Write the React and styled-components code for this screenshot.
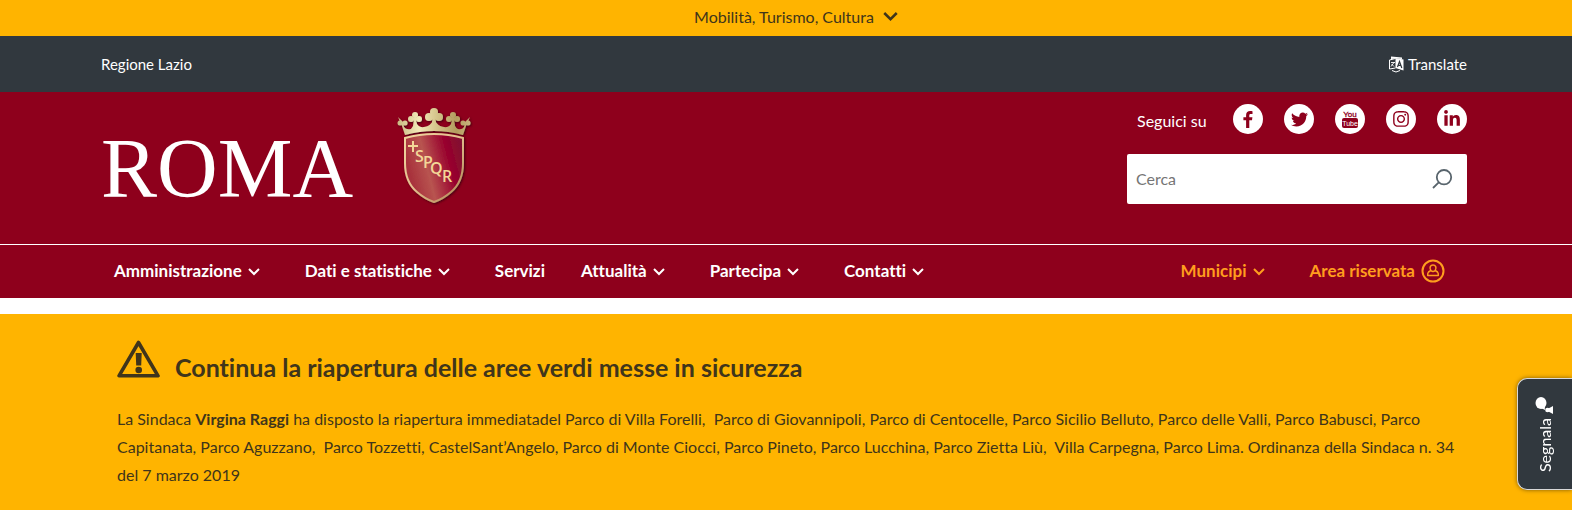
// Dependencies
import React from 'react';
import styled, { createGlobalStyle } from 'styled-components';
import { FaTwitter, FaInstagram, FaLinkedinIn } from 'react-icons/fa';

// Styles
const red = '#8e001c'
const dark = '#31383e'
const yellow = '#ffb400'
const ink = '#40351b'

const GlobalStyle = createGlobalStyle`
  * {
    box-sizing: border-box;
  }

  body {
    margin: 0;
    background: #fff;
    color: ${ink};
    font-family: Lato, 'Liberation Sans', sans-serif;
    font-size: 16px;
    font-variant-ligatures: none;
    line-height: 28px;
  }

  a {
    color: inherit;
    text-decoration: none;
  }

  button, input {
    font: inherit;
    color: inherit;
    border: 0;
    padding: 0;
    background: none;
  }

  svg {
    display: block;
    flex: none;
  }
`

const Container = styled.div`
  display: flex;
  justify-content: space-between;
  padding: 0 105px 0 101px;
`

const TopicsBar = styled.div`
  display: flex;
  justify-content: center;
  height: 36px;
  padding: 0 0 2px 20px;
  background: ${yellow};
`

const TopicsButton = styled.button`
  display: flex;
  align-items: center;
  gap: 9px;

  svg {
    margin-bottom: 4px;
  }
`

const RegionBar = styled(Container)`
  align-items: center;
  height: 56px;
  background: ${dark};
  color: #fff;
  font-size: 15px;
`

const TranslateLink = styled.a`
  display: flex;
  align-items: center;
  gap: 4px;
`

const Header = styled.header`
  background: ${red};
  color: #fff;
`

const Masthead = styled(Container)`
  height: 152px;
  padding-top: 12px;
`

const Brand = styled.a`
  display: flex;
  align-items: flex-start;
  gap: 44px;
`

const Wordmark = styled.span`
  padding-top: 17px;
  font-family: 'Liberation Serif', serif;
  font-size: 84px;
  line-height: 96px;
`

const BrandCrest = styled.span`
  padding-top: 4px;
`

const Tools = styled.div`
  display: flex;
  flex-direction: column;
  gap: 19px;
  width: 340px;
`

const Social = styled.div`
  display: flex;
  gap: 21px;
  padding-left: 10px;
`

const SocialLabel = styled.span`
  margin-right: auto;
  padding-top: 3px;
`

const SocialLink = styled.a`
  display: flex;
  align-items: center;
  justify-content: center;
  width: 30px;
  height: 30px;
  border-radius: 50%;
  background: #fff;
  color: ${red};
`

const SearchForm = styled.form`
  display: flex;
  align-items: center;
  height: 50px;
  padding: 0 14px 0 9px;
  border-radius: 2px;
  background: #fff;
  color: #58646c;
`

const SearchInput = styled.input`
  flex: 1;
  min-width: 0;
  outline: none;

  &::placeholder {
    color: #757575;
    opacity: 1;
  }
`

const Nav = styled.nav`
  border-top: 1px solid #fff;
`

const NavInner = styled(Container)`
  height: 53px;
  padding-left: 114px;
  padding-right: 127px;
`

const NavList = styled.ul`
  display: flex;
  gap: ${props => props.$accent ? '45px' : '36px'};
  margin: 0;
  padding: 0;
  list-style: none;
  font-size: 17px;
  font-weight: bold;
  color: ${props => props.$accent ? '#ff9d1e' : '#fff'};
`

const NavItem = styled.li`
  padding-right: ${props => props.$sub ? '9px' : '0'};
`

const NavLink = styled.a`
  display: flex;
  align-items: center;
  gap: 6px;
  height: 52px;
`

const Alert = styled.section`
  margin-top: 16px;
  padding: 26px 117px 21px;
  background: ${yellow};
`

const AlertHeader = styled.div`
  display: flex;
  gap: 15px;
  margin-bottom: 22px;
`

const AlertTitle = styled.h2`
  margin: 0;
  padding-top: 11px;
  font-size: 25px;
  line-height: 32px;
`

const AlertText = styled.p`
  margin: 0;
`

const ReportButton = styled.button`
  position: fixed;
  right: 0;
  top: 378px;
  display: flex;
  flex-direction: column;
  align-items: center;
  gap: 4px;
  width: 55px;
  height: 112px;
  padding-top: 17px;
  border: 1px solid #d8d8d8;
  border-right: 0;
  border-radius: 10px 0 0 10px;
  background: ${dark};
  color: #fff;
  box-shadow: 0 0 4px rgba(0, 0, 0, 0.5);
`

const ReportLabel = styled.span`
  writing-mode: vertical-rl;
  transform: rotate(180deg);
`

// Icons
const Chevron = ({ width = 12, stroke = 2 }) => (
  <svg width={width} height={width} viewBox="0 0 12 12" fill="none" stroke="currentColor" strokeWidth={stroke}>
    <path d="M1 4 L6 9 L11 4" />
  </svg>
)

const TranslateIcon = () => (
  <svg width="15" height="17" viewBox="0 0 15 17">
    <path d="M6.5 2 L14.5 3.5 V14.5 L6.5 12 Z" fill="#fff" />
    <path d="M6.5 2.5 L0.5 4 V13 L6.5 12 M3 14.5 Q7 17.5 11 14.5" fill="none" stroke="#fff" />
    <path d="M2 0.5 L13 1.5 V3 L7 2.5 L2 3 Z" fill="#fff" />
    <path d="M2 6.5 H6 M5 6.5 L2 10.5 M2.5 8 L5 10.5" fill="none" stroke="#fff" strokeWidth="0.9" />
    <path d="M8.5 11 L10.5 5.5 L12.8 12 M9.3 9.3 H11.8" fill="none" stroke={dark} strokeWidth="1.2" />
  </svg>
)

const FacebookIcon = () => (
  <svg width="10" height="17" viewBox="0 0 10 17" fill="currentColor">
    <path d="M9.5 0.2 V3 H7.8 C6.6 3 6.3 3.6 6.3 4.4 V6.2 H9.4 L9 9.2 H6.3 V17 H3.1 V9.2 H0.4 V6.2 H3.1 V3.9 C3.1 1.3 4.7 0 7.1 0 C8.2 0 9.2 0.1 9.5 0.2 Z" />
  </svg>
)

const YoutubeIcon = () => (
  <svg width="18" height="20" viewBox="0 0 18 20" fontFamily="'Liberation Sans', sans-serif" textAnchor="middle">
    <text x="9" y="8" fontSize="8" fill={red} stroke={red} strokeWidth="0.3">You</text>
    <rect x="1" y="9" width="16" height="10" rx="2" fill={red} />
    <text x="9" y="17" fontSize="7" fill="#fff">Tube</text>
  </svg>
)

const SearchIcon = () => (
  <svg width="21" height="20" viewBox="0 0 21 20" fill="none" stroke="currentColor" strokeWidth="1.8">
    <circle cx="12" cy="8.2" r="7.2" />
    <path d="M7 13.2 L1 19" />
  </svg>
)

const UserIcon = () => (
  <svg width="24" height="24" viewBox="0 0 24 24" fill="none" stroke="currentColor">
    <circle cx="12" cy="12" r="10.5" strokeWidth="2" />
    <path d="M9.8 11.5 C8 8.5 9.5 6 12 6 S16 8.5 14.2 11.5 L16.5 13 Q17.5 14 17.3 16.5 H6.7 Q6.5 14 7.5 13 Z M9.8 11.5 Q12 13.5 14.2 11.5" strokeWidth="1.5" strokeLinejoin="round" />
  </svg>
)

const WarningIcon = () => (
  <svg width="43" height="38" viewBox="0 0 43 38">
    <path d="M21.5 2.5 L41 35.8 H2 Z" fill="none" stroke={ink} strokeWidth="3.6" strokeLinejoin="round" />
    <path d="M18.7 13 H24.7 L24.2 25.5 H19.2 Z" fill={ink} />
    <circle cx="21.7" cy="30" r="3.3" fill={ink} />
  </svg>
)

const ReportIcon = () => (
  <svg width="20" height="18" viewBox="0 0 20 18" fill="currentColor">
    <ellipse cx="6" cy="7" rx="5.5" ry="6" />
    <path d="M6 12 L10 14 L9.5 10 Z" />
    <circle cx="12.5" cy="14" r="2.3" />
    <path d="M12.5 13 L18 10 V18 L12.5 15 Z" />
  </svg>
)

const Trefoil = ({ x, y, r = 3 }) => (
  <g>
    <circle cx={x} cy={y} r={r} />
    <circle cx={x - r - 1} cy={y + r + 1} r={r} />
    <circle cx={x + r + 1} cy={y + r + 1} r={r} />
    <circle cx={x} cy={y + r + 1} r={r - 1} />
    <path d={`M${x - 1} ${y + 4} h2 l1 7 l4 6 h-12 l4 -6 Z`} />
  </g>
)

const Crest = () => (
  <svg width="76" height="100" viewBox="0 0 76 100" role="img" aria-label="SPQR">
    <defs>
      <linearGradient id="gold" gradientUnits="userSpaceOnUse" x1="0" y1="0" x2="74" y2="0">
        <stop offset="0" stopColor="#c8b982" />
        <stop offset="0.3" stopColor="#f3e9b9" />
        <stop offset="0.5" stopColor="#d9ca91" />
        <stop offset="0.8" stopColor="#b39c5e" />
        <stop offset="1" stopColor="#c9b67f" />
      </linearGradient>
      <linearGradient id="field" x1="0" x2="1" y1="0.3" y2="0">
        <stop offset="0" stopColor="#a8323c" />
        <stop offset="0.3" stopColor="#b85450" />
        <stop offset="0.68" stopColor="#98002d" />
        <stop offset="1" stopColor="#7c1631" />
      </linearGradient>
      <linearGradient id="rim" x1="0" x2="1" y1="0" y2="1">
        <stop offset="0" stopColor="#f0d49e" />
        <stop offset="0.5" stopColor="#e3be8d" />
        <stop offset="1" stopColor="#ad8251" />
      </linearGradient>
      <filter id="shade" x="-20%" y="-20%" width="140%" height="140%">
        <feDropShadow dx="1" dy="1" stdDeviation="1" floodColor="#30000a" floodOpacity="0.8" />
      </filter>
    </defs>
    <g fill="url(#gold)" filter="url(#shade)">
      <path d="M1 9 L6 14 L7 19 Q9 22 14 21 Q18 20 17 14 H19 Q21 20 27 19 Q34 18 36 12 H38 Q40 18 47 19 Q53 20 55 14 H57 Q57 20 61 21 Q65 22 67 19 L68 14 L73 9 L69 18 L66 27 Q37 19 8 27 L5 18 Z" />
      <circle cx="3" cy="15" r="2.5" />
      <circle cx="8" cy="15" r="2.5" />
      <circle cx="66" cy="15" r="2.5" />
      <circle cx="71" cy="15" r="2.5" />
      <Trefoil x={18} y={7} />
      <Trefoil x={37} y={4} r={4} />
      <Trefoil x={56} y={7} />
    </g>
    <path d="M8 30 Q37 22 66 30 V55 Q66 74 54 84 Q46 91 37 94 Q28 91 20 84 Q8 74 8 55 Z" fill="url(#field)" stroke="url(#rim)" strokeWidth="2" filter="url(#shade)" />
    <g fill="#f3d697" fontFamily="'Open Sans', sans-serif" fontSize="16" fontWeight="600">
      <path d="M16 33 V44 M11 38 H21" stroke="#f3d697" strokeWidth="2" />
      <text x="18" y="54">S</text>
      <text x="26" y="60">P</text>
      <text x="33" y="66">Q</text>
      <text x="45" y="74">R</text>
    </g>
  </svg>
)

// Data
const mainMenu = [
  { label: 'Amministrazione', sub: true },
  { label: 'Dati e statistiche', sub: true },
  { label: 'Servizi', sub: false },
  { label: 'Attualità', sub: true },
  { label: 'Partecipa', sub: true },
  { label: 'Contatti', sub: true },
]

const socials = [
  { name: 'Facebook', icon: <FacebookIcon /> },
  { name: 'Twitter', icon: <FaTwitter size={17} /> },
  { name: 'YouTube', icon: <YoutubeIcon /> },
  { name: 'Instagram', icon: <FaInstagram size={18} /> },
  { name: 'LinkedIn', icon: <FaLinkedinIn size={18} /> },
]

// Components
const App = () => {
  return (
    <>
      <GlobalStyle />
      <TopicsBar>
        <TopicsButton type="button">
          Mobilità, Turismo, Cultura
          <Chevron width={15} />
        </TopicsButton>
      </TopicsBar>
      <RegionBar>
        <a href="#regione">Regione Lazio</a>
        <TranslateLink href="#translate">
          <TranslateIcon />
          Translate
        </TranslateLink>
      </RegionBar>
      <Header>
        <Masthead>
          <Brand href="#home">
            <Wordmark>ROMA</Wordmark>
            <BrandCrest><Crest /></BrandCrest>
          </Brand>
          <Tools>
            <Social>
              <SocialLabel>Seguici su</SocialLabel>
              {socials.map(social => (
                <SocialLink key={social.name} href="#social" aria-label={social.name}>{social.icon}</SocialLink>
              ))}
            </Social>
            <SearchForm>
              <SearchInput type="text" placeholder="Cerca" aria-label="Cerca" />
              <button type="submit" aria-label="Cerca"><SearchIcon /></button>
            </SearchForm>
          </Tools>
        </Masthead>
        <Nav>
          <NavInner>
            <NavList>
              {mainMenu.map(item => (
                <NavItem key={item.label} $sub={item.sub}>
                  <NavLink href="#menu">
                    {item.label}
                    {item.sub && <Chevron />}
                  </NavLink>
                </NavItem>
              ))}
            </NavList>
            <NavList $accent>
              <NavItem><NavLink href="#municipi">Municipi<Chevron /></NavLink></NavItem>
              <NavItem><NavLink href="#area">Area riservata<UserIcon /></NavLink></NavItem>
            </NavList>
          </NavInner>
        </Nav>
      </Header>
      <Alert>
        <AlertHeader>
          <WarningIcon />
          <AlertTitle>Continua la riapertura delle aree verdi messe in sicurezza</AlertTitle>
        </AlertHeader>
        <AlertText>
          La Sindaca <strong>Virgina Raggi</strong> ha disposto la riapertura immediatadel Parco di Villa Forelli,&nbsp; Parco di Giovannipoli, Parco di Centocelle, Parco Sicilio Belluto, Parco delle Valli, Parco Babusci, Parco Capitanata, Parco Aguzzano,&nbsp; Parco Tozzetti, CastelSant’Angelo, Parco di Monte Ciocci, Parco Pineto, Parco Lucchina, Parco Zietta Liù,&nbsp; Villa Carpegna, Parco Lima. Ordinanza della Sindaca n. 34 del 7 marzo 2019
        </AlertText>
      </Alert>
      <ReportButton type="button">
        <ReportIcon />
        <ReportLabel>Segnala</ReportLabel>
      </ReportButton>
    </>
  )
}

export default App
